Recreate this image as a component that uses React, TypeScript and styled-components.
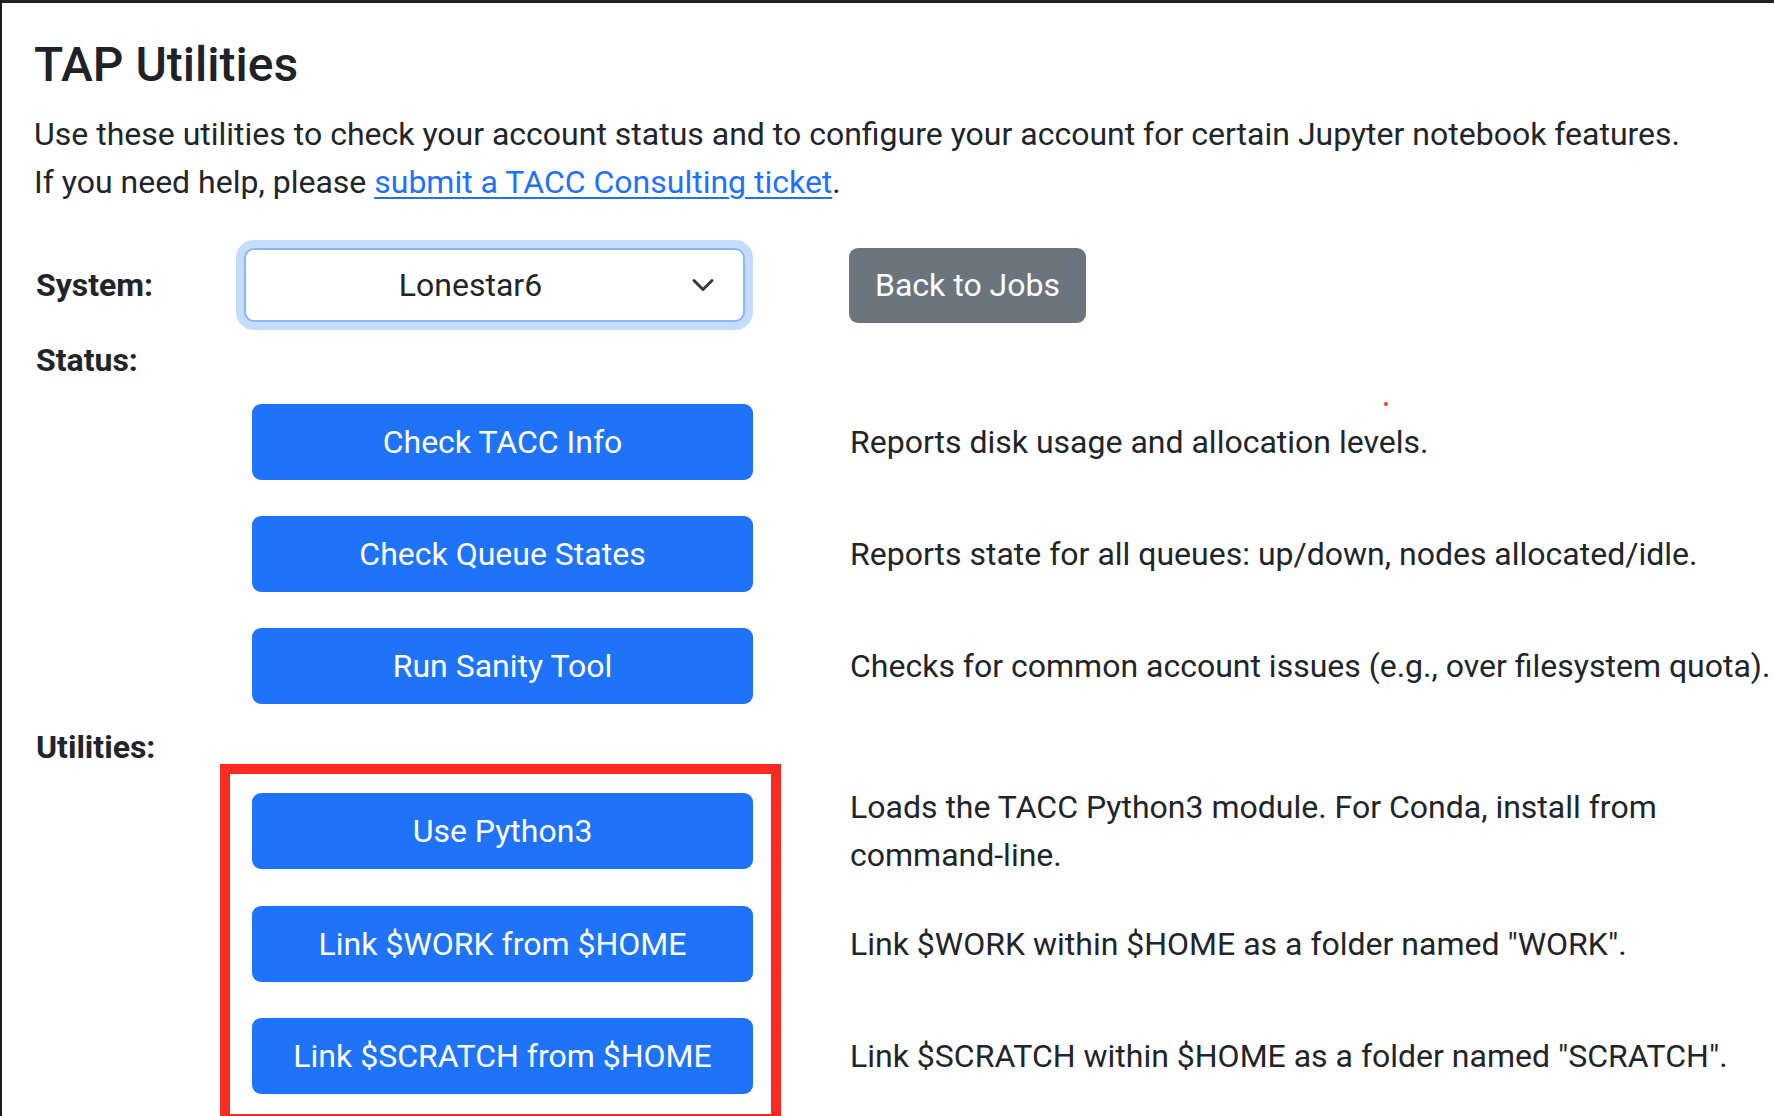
import React from "react";
import styled, { createGlobalStyle } from "styled-components";

const GlobalStyle = createGlobalStyle`
  html, body {
    margin: 0;
    padding: 0;
    background: #ffffff;
    overflow: hidden;
  }
  body {
    font-family: Roboto, "Liberation Sans", sans-serif;
    color: #212529;
    -webkit-font-smoothing: antialiased;
  }
`;

const Page = styled.div`
  position: relative;
  box-sizing: border-box;
  width: 1774px;
  height: 1116px;
  border-top: 3px solid #222222;
  border-left: 2px solid #1b1b1b;
  padding-left: 32px;
  overflow: hidden;
`;

const Title = styled.h4`
  margin: 33px 0 0 0;
  font-size: 48px;
  line-height: 57.6px;
  font-weight: 500;
  color: #1f2327;
`;

const Intro = styled.p`
  margin: 16px 0 0 0;
  font-size: 32px;
  line-height: 48px;
  white-space: nowrap;
`;

const Link = styled.a`
  color: #1f72f8;
  text-decoration: underline;
  text-underline-offset: 4px;
  text-decoration-thickness: 2px;
`;

const Row = styled.div<{ $gap?: number }>`
  display: grid;
  grid-template-columns: 218px 501px 1fr;
  align-items: center;
  margin-top: ${(p) => p.$gap ?? 0}px;
`;

const Label = styled.div<{ $gap?: number }>`
  margin-top: ${(p) => p.$gap ?? 0}px;
  padding-left: 2px;
  font-size: 32px;
  line-height: 48px;
  font-weight: 700;
  color: #212529;
`;

const SelectBox = styled.div`
  position: relative;
  box-sizing: border-box;
  height: 74px;
  margin-left: -8px;
  margin-right: 8px;
  border: 2px solid #88b7fb;
  border-radius: 10px;
  box-shadow: 0 0 0 8px #c6dcfc;
  background: #ffffff;
  display: flex;
  align-items: center;
  justify-content: center;
  padding: 0 72px 0 24px;
  font-size: 32px;
  line-height: 48px;
  color: #212529;
`;

const Chevron = styled.svg`
  position: absolute;
  right: 24px;
  top: 50%;
  transform: translateY(-50%);
  width: 32px;
  height: 24px;
`;

const Button = styled.button<{ $variant?: "primary" | "secondary" }>`
  box-sizing: border-box;
  height: 76px;
  border: none;
  border-radius: 9px;
  background: ${(p) => (p.$variant === "secondary" ? "#6c757e" : "#1e73f8")};
  color: #ffffff;
  font-family: Roboto, "Liberation Sans", sans-serif;
  font-size: 32px;
  line-height: 48px;
  padding: 12px 24px;
  text-align: center;
  cursor: pointer;
`;

const WideButton = styled(Button)`
  width: 100%;
`;

const BackButton = styled(Button)`
  justify-self: start;
  margin-left: 96px;
  height: 75px;
  padding: 12px 26px;
`;

const Desc = styled.div`
  padding-left: 97px;
  font-size: 32px;
  line-height: 48px;
  white-space: nowrap;
  color: #212529;
`;

const UtilityGroup = styled.div`
  position: relative;
`;

const Highlight = styled.div`
  position: absolute;
  left: 186px;
  top: -19px;
  width: 561px;
  height: 360px;
  box-sizing: border-box;
  border: 10px solid #fc2b21;
  pointer-events: none;
`;

const Dot = styled.div`
  position: absolute;
  left: 1382px;
  top: 399px;
  width: 4px;
  height: 4px;
  border-radius: 50%;
  background: #f23a2f;
`;

export default function App() {
  return (
    <>
      <GlobalStyle />
      <Page>
        <Title>TAP Utilities</Title>
        <Intro>
          Use these utilities to check your account status and to configure your account for certain Jupyter notebook features.
          <br />
          If you need help, please <Link href="#">submit a TACC Consulting ticket</Link>.
        </Intro>

        <Row $gap={42}>
          <Label>System:</Label>
          <SelectBox>
            Lonestar6
            <Chevron viewBox="0 0 16 16" preserveAspectRatio="xMidYMid meet">
              <path d="m2 5 6 6 6-6" fill="none" stroke="#343a40" strokeWidth="2" strokeLinecap="round" strokeLinejoin="round" />
            </Chevron>
          </SelectBox>
          <BackButton $variant="secondary">Back to Jobs</BackButton>
        </Row>

        <Label $gap={13}>Status:</Label>

        <Row $gap={20}>
          <span />
          <WideButton>Check TACC Info</WideButton>
          <Desc>Reports disk usage and allocation levels.</Desc>
        </Row>
        <Row $gap={36}>
          <span />
          <WideButton>Check Queue States</WideButton>
          <Desc>Reports state for all queues: up/down, nodes allocated/idle.</Desc>
        </Row>
        <Row $gap={36}>
          <span />
          <WideButton>Run Sanity Tool</WideButton>
          <Desc>Checks for common account issues (e.g., over filesystem quota).</Desc>
        </Row>

        <Label $gap={19}>Utilities:</Label>

        <UtilityGroup>
          <Row $gap={12}>
            <span />
            <WideButton>Use Python3</WideButton>
            <Desc>
              Loads the TACC Python3 module. For Conda, install from
              <br />
              command-line.
            </Desc>
          </Row>
          <Row $gap={27}>
            <span />
            <WideButton>Link $WORK from $HOME</WideButton>
            <Desc>Link $WORK within $HOME as a folder named "WORK".</Desc>
          </Row>
          <Row $gap={36}>
            <span />
            <WideButton>Link $SCRATCH from $HOME</WideButton>
            <Desc>Link $SCRATCH within $HOME as a folder named "SCRATCH".</Desc>
          </Row>
          <Highlight />
        </UtilityGroup>
        <Dot />
      </Page>
    </>
  );
}
